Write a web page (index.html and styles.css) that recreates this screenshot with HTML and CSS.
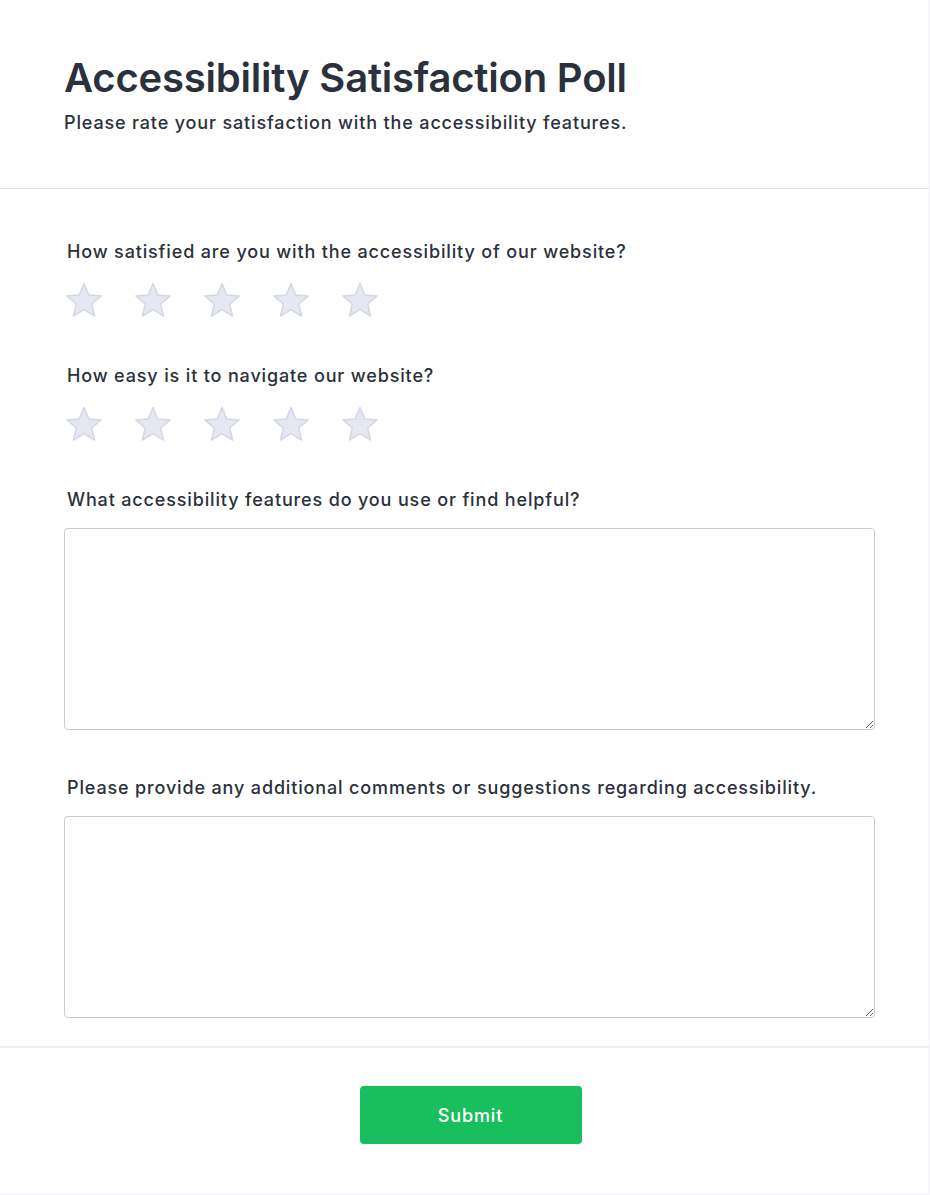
FILE: index.html
```html
<!DOCTYPE html>
<html lang="en">
<head>
<meta charset="utf-8">
<title>Accessibility Satisfaction Poll</title>
<link rel="stylesheet" href="styles.css">
</head>
<body>
<div class="card">
  <header class="header">
    <h1 class="title">Accessibility Satisfaction Poll</h1>
    <p class="subtitle">Please rate your satisfaction with the accessibility features.</p>
  </header>
  <form class="body">
    <div class="question">
      <label class="label">How satisfied are you with the accessibility of our website?</label>
      <div class="stars">
        <svg class="star" viewBox="0 0 40 40"><polygon points="20,2.5 24.76,13.95 37.12,14.94 27.7,23 30.58,35.06 20,28.6 9.42,35.06 12.3,23 2.88,14.94 15.24,13.95"/></svg>
        <svg class="star" viewBox="0 0 40 40"><polygon points="20,2.5 24.76,13.95 37.12,14.94 27.7,23 30.58,35.06 20,28.6 9.42,35.06 12.3,23 2.88,14.94 15.24,13.95"/></svg>
        <svg class="star" viewBox="0 0 40 40"><polygon points="20,2.5 24.76,13.95 37.12,14.94 27.7,23 30.58,35.06 20,28.6 9.42,35.06 12.3,23 2.88,14.94 15.24,13.95"/></svg>
        <svg class="star" viewBox="0 0 40 40"><polygon points="20,2.5 24.76,13.95 37.12,14.94 27.7,23 30.58,35.06 20,28.6 9.42,35.06 12.3,23 2.88,14.94 15.24,13.95"/></svg>
        <svg class="star" viewBox="0 0 40 40"><polygon points="20,2.5 24.76,13.95 37.12,14.94 27.7,23 30.58,35.06 20,28.6 9.42,35.06 12.3,23 2.88,14.94 15.24,13.95"/></svg>
      </div>
    </div>
    <div class="question">
      <label class="label">How easy is it to navigate our website?</label>
      <div class="stars">
        <svg class="star" viewBox="0 0 40 40"><polygon points="20,2.5 24.76,13.95 37.12,14.94 27.7,23 30.58,35.06 20,28.6 9.42,35.06 12.3,23 2.88,14.94 15.24,13.95"/></svg>
        <svg class="star" viewBox="0 0 40 40"><polygon points="20,2.5 24.76,13.95 37.12,14.94 27.7,23 30.58,35.06 20,28.6 9.42,35.06 12.3,23 2.88,14.94 15.24,13.95"/></svg>
        <svg class="star" viewBox="0 0 40 40"><polygon points="20,2.5 24.76,13.95 37.12,14.94 27.7,23 30.58,35.06 20,28.6 9.42,35.06 12.3,23 2.88,14.94 15.24,13.95"/></svg>
        <svg class="star" viewBox="0 0 40 40"><polygon points="20,2.5 24.76,13.95 37.12,14.94 27.7,23 30.58,35.06 20,28.6 9.42,35.06 12.3,23 2.88,14.94 15.24,13.95"/></svg>
        <svg class="star" viewBox="0 0 40 40"><polygon points="20,2.5 24.76,13.95 37.12,14.94 27.7,23 30.58,35.06 20,28.6 9.42,35.06 12.3,23 2.88,14.94 15.24,13.95"/></svg>
      </div>
    </div>
    <div class="question">
      <label class="label">What accessibility features do you use or find helpful?</label>
      <textarea class="textarea"></textarea>
    </div>
    <div class="question">
      <label class="label">Please provide any additional comments or suggestions regarding accessibility.</label>
      <textarea class="textarea"></textarea>
    </div>
  </form>
  <footer class="footer">
    <button class="submit" type="button">Submit</button>
  </footer>
</div>
</body>
</html>
```

FILE: styles.css
```css
* { box-sizing: border-box; }
html, body { margin: 0; padding: 0; background: #ffffff; }
body {
  font-family: Inter, "Noto Sans", sans-serif;
  color: #2b303d;
}
.card {
  width: 930px;
  min-height: 1195px;
  background: #fff;
  border-right: 1px solid #f0f0f6;
  border-bottom: 1px solid #f0f0f6;
  display: flex;
  flex-direction: column;
}
.header {
  padding: 54px 64px 0;
  height: 189px;
  border-bottom: 1px solid #dcdcec;
}
.title {
  margin: 0;
  font-size: 40px;
  font-weight: 600;
  line-height: 48px;
  color: #2b303d;
  letter-spacing: -0.2px;
}
.subtitle {
  margin: 8px 0 0;
  font-size: 18px;
  font-weight: 500;
  line-height: 26px;
  letter-spacing: 0.85px;
  color: #2b303d;
}
.body {
  padding: 50px 54px 0 64px;
  display: flex;
  flex-direction: column;
}
.question { display: flex; flex-direction: column; }
.label {
  display: block;
  font-size: 18px;
  font-weight: 500;
  line-height: 26px;
  letter-spacing: 0.85px;
  margin-left: 3px;
  color: #2b303d;
}
.stars {
  display: flex;
  gap: 29px;
  margin: 16px 0 42px;
}
.star { width: 40px; height: 40px; display: block; }
.star polygon {
  fill: #e5e7f1;
  stroke: #d4d7e4;
  stroke-width: 1.5;
  stroke-linejoin: round;
}
.textarea {
  display: block;
  width: 811px;
  height: 202px;
  margin: 15px 0 45px;
  border: 1px solid #c8cbd9;
  border-radius: 4px;
  font-family: inherit;
  font-size: 16px;
  resize: vertical;
}
.question:last-child .textarea { margin-bottom: 28px; }
.footer {
  border-top: 2px solid #ededf3;
  display: flex;
  justify-content: center;
  padding: 38px 0 0 12px;
  flex: 1;
}
.submit {
  width: 222px;
  height: 58px;
  background: #19bf5c;
  color: #fff;
  border: none;
  border-radius: 4px;
  font-family: inherit;
  font-size: 18px;
  font-weight: 500;
  letter-spacing: 0.85px;
}
```
